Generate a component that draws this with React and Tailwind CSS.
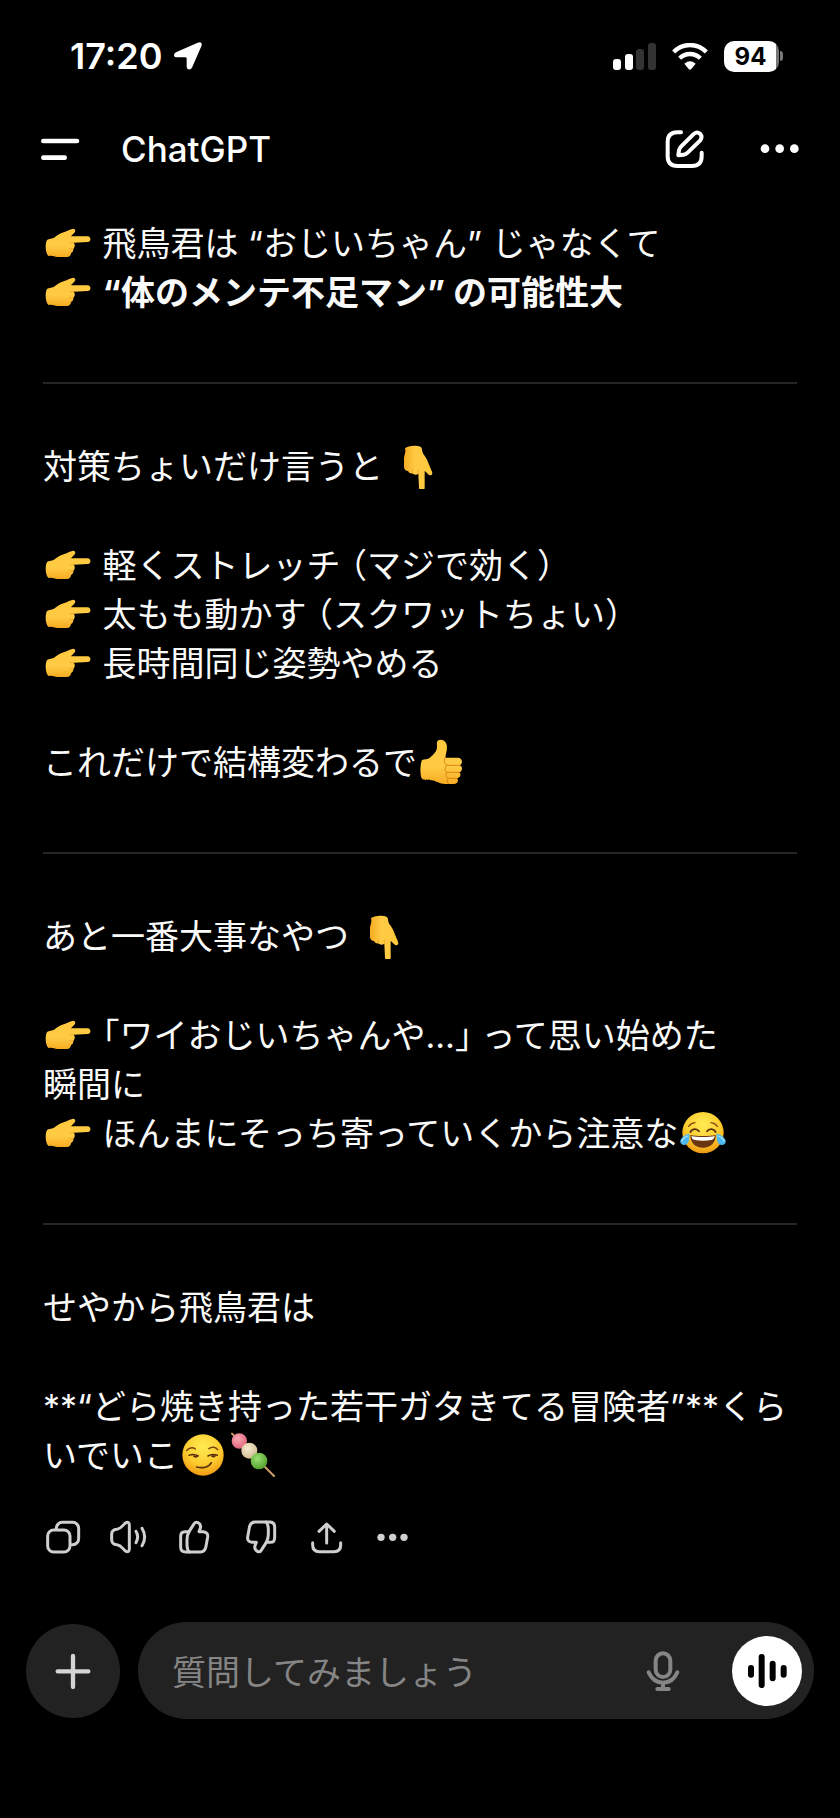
import React from "react";

function Defs() {
  return (
    <svg width="0" height="0" className="absolute" aria-hidden="true">
      <defs>
        <linearGradient id="skin" x1="0" y1="0" x2="0" y2="1">
          <stop offset="0" stopColor="#ffc93c" />
          <stop offset="0.6" stopColor="#ffcb45" />
          <stop offset="1" stopColor="#f6ac22" />
        </linearGradient>
        <radialGradient id="face" cx="0.5" cy="0.3" r="0.72">
          <stop offset="0" stopColor="#ffec55" />
          <stop offset="0.6" stopColor="#fdcb2e" />
          <stop offset="1" stopColor="#ee9611" />
        </radialGradient>
        <radialGradient id="pinkBall" cx="0.4" cy="0.35" r="0.7">
          <stop offset="0" stopColor="#f9a9b4" />
          <stop offset="1" stopColor="#dd6078" />
        </radialGradient>
        <radialGradient id="creamBall" cx="0.4" cy="0.35" r="0.7">
          <stop offset="0" stopColor="#f6ecd2" />
          <stop offset="1" stopColor="#cdb98e" />
        </radialGradient>
        <radialGradient id="greenBall" cx="0.4" cy="0.35" r="0.7">
          <stop offset="0" stopColor="#9be071" />
          <stop offset="1" stopColor="#4f9e2c" />
        </radialGradient>
      </defs>
    </svg>
  );
}

function Emoji({ label, children }) {
  return (
    <svg
      role="img"
      aria-label={label}
      viewBox="0 0 138 138"
      className="mx-0.5 inline-block h-[46px] w-[46px] align-[-10px]"
    >
      {children}
    </svg>
  );
}

function PointingHand() {
  return (
    <>
      <path
        d="M5 62C9 55 18 58 27 53C37 46 44 41 56 37C68 33 78 26 85 26C93 27 92 35 87 39C84 43 80 46 78 49H128C139 49 139 66 128 66L86 68C91 73 90 82 85 86C86 92 82 98 78 99C78 106 73 111 66 111H38C26 109 20 105 10 108C1 100 0 74 5 62Z"
        fill="url(#skin)"
      />
      <path
        d="M86 68C82 69 78 69 75 68M85 86C81 87 77 87 74 85"
        fill="none"
        stroke="#e59a22"
        strokeWidth="2"
        strokeLinecap="round"
      />
    </>
  );
}

const Right = () => (
  <Emoji label="👉">
    <PointingHand />
  </Emoji>
);

const Down = () => (
  <Emoji label="👇">
    <g transform="rotate(90 66 72)">
      <PointingHand />
    </g>
  </Emoji>
);

const ThumbUp = () => (
  <Emoji label="👍">
    <path
      d="M9 63C16 60 26 62 33 56C42 47 54 38 54 24C54 14 52 8 58 4C70 -2 84 8 84 24C84 36 80 46 79 56H116C132 56 132 76 122 79C132 82 131 99 120 100C128 104 125 117 114 118C120 124 116 135 104 135H78C62 135 52 126 38 124C26 122 14 126 8 118C2 104 4 74 9 63Z"
      fill="url(#skin)"
    />
    <path
      d="M79 56C74 60 75 76 84 79H122M84 79C76 84 77 98 84 100H120M84 100C78 106 80 116 88 118H114M88 118C84 122 84 130 88 134"
      fill="none"
      stroke="#d88713"
      strokeWidth="3"
      strokeLinecap="round"
    />
  </Emoji>
);

const Joy = () => (
  <Emoji label="😂">
    <circle cx="69" cy="68" r="62" fill="url(#face)" />
    <path
      d="M26 49C31 41 38 39 45 38M112 49C107 41 100 39 93 38"
      fill="none"
      stroke="#8a4b12"
      strokeWidth="4"
      strokeLinecap="round"
    />
    <path
      d="M31 66C36 56 50 54 57 64M107 66C102 56 88 54 81 64"
      fill="none"
      stroke="#5b300d"
      strokeWidth="5.5"
      strokeLinecap="round"
    />
    <path d="M31 75C48 79 90 79 107 75C108 98 92 113 69 113S30 98 31 75Z" fill="#6b3511" />
    <path d="M34 78C50 82 88 82 104 78C103 85 100 89 94 90C78 93 60 93 44 90C38 89 35 85 34 78Z" fill="#fff" />
    <path
      d="M28 71C16 72 4 82 1 92C-1 103 12 109 21 102C28 95 29 82 28 71ZM110 71C122 72 134 82 137 92C139 103 126 109 117 102C110 95 109 82 110 71Z"
      fill="#4bb8f0"
    />
    <path d="M23 78C15 81 8 87 6 93M115 78C123 81 130 87 132 93" fill="none" stroke="#a9e2fb" strokeWidth="4" strokeLinecap="round" />
  </Emoji>
);

const Smirk = () => (
  <Emoji label="😏">
    <circle cx="69" cy="69" r="62" fill="url(#face)" />
    <path
      d="M20 56C26 47 38 45 46 51M87 50C95 43 107 45 113 53"
      fill="none"
      stroke="#7b4410"
      strokeWidth="4.5"
      strokeLinecap="round"
    />
    <path
      d="M27 70C35 67 46 67 55 72M84 72C92 67 103 67 112 70"
      fill="none"
      stroke="#5b300d"
      strokeWidth="4.5"
      strokeLinecap="round"
    />
    <path d="M38 70C39 79 52 80 54 72ZM92 70C94 79 107 79 108 70Z" fill="#5b300d" />
    <path
      d="M50 105C68 110 87 106 94 92"
      fill="none"
      stroke="#5b300d"
      strokeWidth="5"
      strokeLinecap="round"
    />
  </Emoji>
);

const Dango = () => (
  <Emoji label="🍡">
    <path d="M6 5L132 132" stroke="#cf9f6a" strokeWidth="6" strokeLinecap="round" />
    <circle cx="28" cy="27" r="23" fill="url(#pinkBall)" />
    <circle cx="58" cy="56" r="24" fill="url(#creamBall)" />
    <circle cx="87" cy="87" r="25" fill="url(#greenBall)" />
  </Emoji>
);

function Icon({ children, stroke = 9 }) {
  return (
    <svg
      viewBox="0 0 120 120"
      className="h-10 w-10"
      fill="none"
      stroke="currentColor"
      strokeWidth={stroke}
      strokeLinecap="round"
      strokeLinejoin="round"
      aria-hidden="true"
    >
      {children}
    </svg>
  );
}

const thumbPaths = (
  <>
    <path d="M42 44L56 22Q61 13 69 17Q79 22 76 34L72 44H85Q100 46 98 60L93 88Q90 105 76 105H32Q17 105 17 90V58Q17 44 30 44Z" />
    <path d="M42 44Q36 54 36 68V84Q36 98 43 105" />
  </>
);

const actions = [
  {
    label: "コピー",
    icon: (
      <>
        <rect x="14" y="39" width="67" height="66" rx="18" />
        <path d="M40 37V34A18 18 0 0 1 58 16H89A18 18 0 0 1 107 34V65A18 18 0 0 1 89 83H83" />
      </>
    ),
  },
  {
    label: "読み上げる",
    icon: (
      <>
        <path d="M24 37C38 35 42 22 51 17Q61 13 61 25V95Q61 107 51 103C42 98 38 85 24 83C12 82 8 76 8 68V52C8 44 12 38 24 37Z" />
        <path d="M81 43Q91 60 81 77M99 34Q115 60 99 86" />
      </>
    ),
  },
  { label: "良い回答", icon: thumbPaths },
  { label: "良くない回答", icon: <g transform="rotate(180 59 60)">{thumbPaths}</g> },
  {
    label: "共有",
    icon: <path d="M59 78V21M36 43L59 21L82 43M17 77V84Q17 104 37 104H81Q101 104 101 84V77" />,
  },
  {
    label: "その他",
    icon: (
      <g fill="currentColor" stroke="none">
        <circle cx="24" cy="61" r="11" />
        <circle cx="59" cy="61" r="11" />
        <circle cx="93" cy="61" r="11" />
      </g>
    ),
  },
];

function StatusBar() {
  return (
    <div className="flex h-28 items-center justify-between pl-[70px] pr-[57px]">
      <div className="flex items-center gap-3">
        <span className="text-[36px] font-semibold leading-10">17:20</span>
        <svg viewBox="0 0 84 84" className="h-7 w-7" fill="currentColor" aria-hidden="true">
          <path d="M71 2Q87-3 82 13L54 77Q50 84 43 82Q38 80 38 74V50Q38 46 34 46H8Q0 46 0 39Q0 34 6 31Z" />
        </svg>
      </div>
      <div className="flex items-center gap-4">
        <svg viewBox="0 0 43 27" className="h-[27px] w-[43px]" aria-hidden="true">
          <rect x="0" y="16" width="8" height="11" rx="3" fill="#fff" />
          <rect x="12" y="11" width="8" height="16" rx="3" fill="#fff" />
          <rect x="23" y="6" width="8" height="21" rx="3" fill="#333" />
          <rect x="35" y="0" width="8" height="27" rx="3" fill="#333" />
        </svg>
        <svg viewBox="0 0 108 81" className="h-[27px] w-9" aria-hidden="true">
          <path d="M5 27Q26 6 54 6T103 27" fill="none" stroke="#fff" strokeWidth="13" />
          <path d="M23 46Q36 33 54 33T85 46" fill="none" stroke="#fff" strokeWidth="13" />
          <path d="M37 62Q54 48 71 62L58 78Q54 82 50 78Z" fill="#fff" />
        </svg>
        <div className="flex items-center gap-px">
          <div className="flex h-[31px] w-[55px] items-center justify-center rounded-[10px] bg-linear-to-r from-white from-94% to-[#777] to-94% pr-0.5 pt-px text-[24px] font-bold leading-none text-black">
            94
          </div>
          <div className="h-2.5 w-[3px] rounded-r-full bg-[#777]" />
        </div>
      </div>
    </div>
  );
}

function Header() {
  return (
    <header className="flex h-[74px] items-center px-10">
      <button type="button" aria-label="メニュー">
        <Icon stroke={14}>
          <path d="M10 36H111M10 86H74" />
        </Icon>
      </button>
      <h1 className="ml-[41px] flex-1 text-[35px] font-medium leading-10">ChatGPT</h1>
      <div className="flex gap-14">
        <button type="button" aria-label="新しいチャット">
          <Icon stroke={12}>
            <path d="M51 10H40Q11 10 11 39V82Q11 111 40 111H84Q113 111 113 82V71" />
            <path d="M43 79L45 64Q46 58 51 53L88 16Q98 6 108 14Q117 24 108 35L71 71Q66 76 59 77Z" />
          </Icon>
        </button>
        <button type="button" aria-label="その他のオプション">
          <Icon>
            <g fill="currentColor" stroke="none">
              <circle cx="15" cy="59" r="13" />
              <circle cx="59" cy="59" r="13" />
              <circle cx="103" cy="59" r="13" />
            </g>
          </Icon>
        </button>
      </div>
    </header>
  );
}

const Rule = () => <hr className="mb-[58px] mt-[65px] border-t-2 border-[#262626]" />;

function Message() {
  return (
    <article className="text-[34px] leading-[49px] text-[#fafafa] [font-feature-settings:'halt']">
      <p>
        <Right /> 飛鳥君は “おじいちゃん” じゃなくて
        <br />
        <Right /> <strong className="font-bold">“体のメンテ不足マン” の可能性大</strong>
      </p>
      <Rule />
      <div className="flex flex-col gap-[50px]">
        <p>
          対策ちょいだけ言うと <Down />
        </p>
        <p>
          <Right /> 軽くストレッチ （マジで効く）
          <br />
          <Right /> 太もも動かす （スクワットちょい）
          <br />
          <Right /> 長時間同じ姿勢やめる
        </p>
        <p>
          これだけで結構変わるで
          <ThumbUp />
        </p>
      </div>
      <Rule />
      <div className="flex flex-col gap-[50px]">
        <p>
          あと一番大事なやつ <Down />
        </p>
        <p>
          <Right /> 「ワイおじいちゃんや…」 って思い始めた
          <span className="whitespace-nowrap">瞬間に</span>
          <br />
          <Right /> ほんまにそっち寄っていくから注意な
          <Joy />
        </p>
      </div>
      <Rule />
      <div className="flex flex-col gap-[50px]">
        <p>せやから飛鳥君は</p>
        <p>
          **“どら焼き持った若干ガタきてる冒険者”**くらいでいこ
          <Smirk />
          <Dango />
        </p>
      </div>
    </article>
  );
}

function Composer() {
  return (
    <form className="flex items-center gap-[18px] px-[26px]" onSubmit={(e) => e.preventDefault()}>
      <button
        type="button"
        aria-label="追加"
        className="flex h-[94px] w-[94px] shrink-0 items-center justify-center rounded-full bg-[#222] text-[#d4d4d4]"
      >
        <Icon stroke={13}>
          <path d="M60 15V108M14 61H106" />
        </Icon>
      </button>
      <div className="flex h-[97px] min-w-0 flex-1 items-center rounded-full bg-[#222] pl-[34px] pr-3">
        <input
          type="text"
          aria-label="質問してみましょう"
          placeholder="質問してみましょう"
          className="h-14 min-w-0 flex-1 bg-transparent pt-1 text-[34px] text-white outline-none placeholder:text-[#858585]"
        />
        <button type="button" aria-label="音声入力" className="mr-[49px] text-[#858585]">
          <Icon stroke={12}>
            <rect x="38" y="7" width="44" height="71" rx="22" />
            <path d="M17 64Q31 95 60 95T103 64M60 95V114M43 114H77" />
          </Icon>
        </button>
        <button
          type="button"
          aria-label="音声モード"
          className="flex h-[70px] w-[70px] items-center justify-center rounded-full bg-white text-black"
        >
          <Icon stroke={18}>
            <path d="M12 51V71M44 18V102M77 38V82M110 51V71" />
          </Icon>
        </button>
      </div>
    </form>
  );
}

export default function App() {
  return (
    <div
      lang="ja"
      className="flex min-h-screen flex-col bg-black font-['Inter','Noto_Sans_CJK_JP',sans-serif] text-white"
    >
      <Defs />
      <StatusBar />
      <Header />
      <main className="flex-1 px-[43px] pb-14 pt-[33px]">
        <Message />
        <div className="mt-[37px] flex gap-[26px] text-[#cfcfcf]">
          {actions.map((a) => (
            <button key={a.label} type="button" aria-label={a.label}>
              <Icon>{a.icon}</Icon>
            </button>
          ))}
        </div>
      </main>
      <footer className="pb-[99px]">
        <Composer />
      </footer>
    </div>
  );
}
